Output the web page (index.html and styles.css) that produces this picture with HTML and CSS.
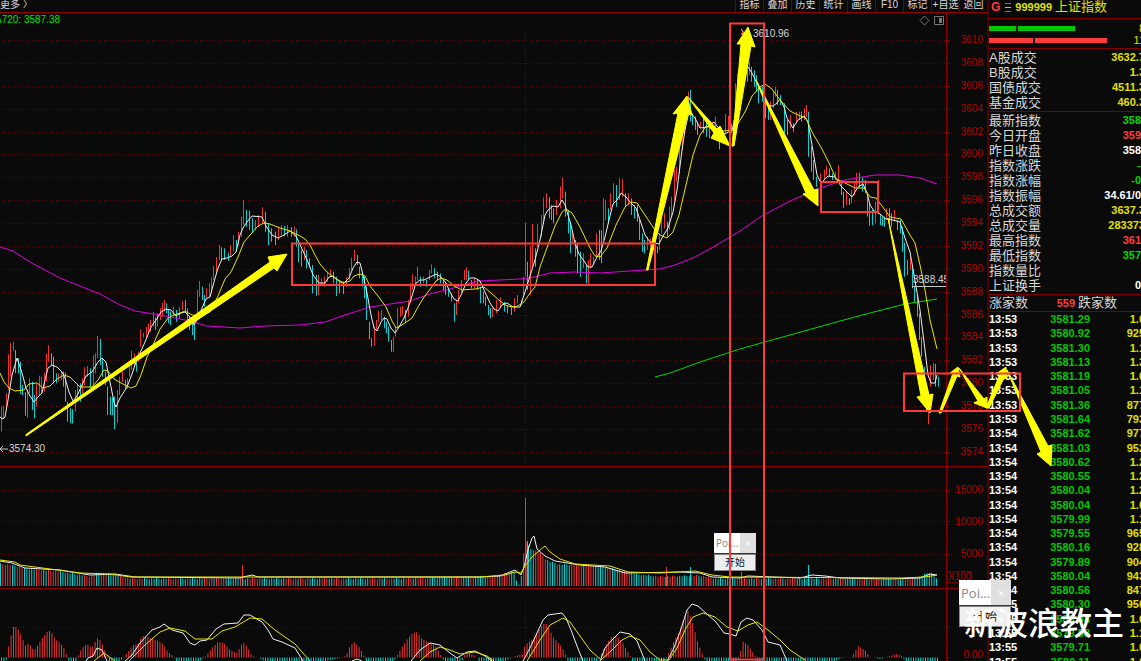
FILE: index.html
```html
<!DOCTYPE html>
<html lang="zh-CN">
<head>
<meta charset="utf-8">
<meta name="viewport" content="width=device-width, initial-scale=1">
<title>上证指数 999999</title>
<link rel="stylesheet" href="styles.css">
</head>
<body>
<div class="app">
  <main class="charts">
    <nav class="toolbar">
      <button class="more" type="button">更多 〉</button>
      <button type="button">指标</button><button type="button">叠加</button><button type="button">历史</button><button type="button">统计</button><button type="button">画线</button><button type="button">F10</button><button type="button">标记</button><button type="button">+自选</button><button type="button">返回</button>
    </nav>
    <section class="panel price">
      <svg id="price" viewBox="0 13 987 454" preserveAspectRatio="none">
        <g id="price-grid"></g>
        <path class="frame" d="M0 466.5H987M946.5 13V467"/>
        <path class="grid" d="M525.5 30V466"/>
        <g id="candles"></g>
        <polyline class="magenta" points="0,247 13,251 30,262 60,278 100,294 120,305 135,311 160,315 190,321 207,326 240,328 265,326 300,325 325,322 345,315 370,307 390,304 410,301 430,294 450,289 470,283 480,281 520,279 535,277 550,273 575,272 600,273 630,271 660,269 675,265 695,257 715,246 740,231 760,217 790,201 820,188 845,180 875,175 900,175 920,178 937,184"/>
        <polyline class="green" points="655,377 670,373 700,362 740,349 790,335 840,321 870,313 905,304 937,299"/>
        <polyline class="white" points="0,417 3,419 5,417 8,400 12,375 17,358 22,373 26,388 30,396 34,402 38,397 42,393 45,380 48,368 52,365 57,367 62,372 65,378 69,392 73,401 77,396 82,385 86,376 92,372 98,362 102,358 106,362 110,382 114,402 116,407 120,398 127,387 132,374 136,362 140,353 145,342 151,327 156,320 161,312 166,309 171,310 176,316 181,313 185,312 190,317 194,325 198,318 202,308 206,299 210,297 214,282 218,268 222,259 227,258 232,256 236,252 240,235 243,228 247,222 252,216 262,217 266,226 272,235 278,238 284,235 290,231 296,236 303,251 308,262 313,275 319,283 325,283 329,277 333,276 338,280 344,283 349,278 353,268 357,262 360,263 363,275 367,293 371,315 374,328 377,331 381,322 384,318 387,319 391,328 395,333 399,327 404,318 408,308 412,296 416,283 420,280 424,280 430,277 436,274 441,277 446,283 450,292 454,299 458,301 462,293 466,283 470,278 475,278 480,281 485,292 490,303 494,309 498,311 502,305 507,303 513,307 520,307 525,292 530,276 535,260 540,240 545,215 548,210 553,206 558,207 562,200 565,205 568,215 571,225 575,243 579,254 584,261 588,267 592,267 597,257 601,251 605,237 609,220 613,204 617,200 621,193 626,197 630,202 636,208 640,220 645,235 650,242 655,243 659,244 663,236 668,228 673,212 677,190 682,150 685,130 688,116 691,113 695,118 700,128 708,127 714,122 720,130 725,134 732,130 737,112 742,80 745,70 748,67 752,73 757,83 762,95 768,106 773,106 777,103 780,99 784,107 787,118 793,128 798,120 804,116 808,122 812,145 817,175 821,183 828,176 835,177 841,186 848,193 852,197 858,187 863,184 867,193 870,205 874,211 880,214 886,219 893,220 900,222 905,238 910,252 914,275 920,310 925,350 928,375 931,383 935,383 937,375"/>
        <polyline class="yellow" points="0,373 4,382 9,388 15,391 24,390 29,384 37,383 43,388 50,386 57,379 64,375 70,377 80,387 92,387 98,380 104,370 108,371 114,379 121,383 131,388 136,386 141,375 147,357 153,345 160,329 168,318 174,315 180,313 185,311 192,315 200,316 210,312 218,296 225,279 231,272 238,257 244,242 251,234 258,226 264,223 270,224 280,228 290,231 300,236 305,239 310,245 315,255 320,264 326,271 333,277 342,283 350,281 354,276 360,274 365,276 370,286 378,296 386,307 392,321 396,328 402,325 412,318 418,307 424,297 431,288 436,281 441,278 447,280 454,286 462,290 475,289 484,287 491,293 500,301 507,306 516,307 524,302 530,293 535,287 540,267 548,245 555,226 562,212 566,209 572,213 580,227 590,248 595,256 600,257 607,248 616,225 625,207 631,202 637,203 645,215 655,230 660,235 667,238 673,232 679,215 686,185 693,155 700,135 706,126 715,129 724,131 734,130 745,112 752,96 760,87 765,84 772,89 780,100 790,111 798,115 806,118 812,132 822,149 830,165 836,179 845,183 855,188 864,188 870,197 876,198 882,206 890,217 901,219 910,235 915,243 920,265 925,290 930,320 937,349"/>
        <path class="mark" d="M912 286.5H946M1 449H8M3 446L0 449L3 452M741 29L745 34M741 34h4"/>
        <path class="icon" d="M924.500 16L929 20.500L924.500 25L920 20.500ZM934.500 16.500h9v8h-9z"/>
        <path class="icon-fill" d="M939 18h3v5h-3z"/>
      </svg>
      <ol class="axis axis-price">
        <li>3610</li><li>3608</li><li>3606</li><li>3604</li><li>3602</li><li>3600</li><li>3598</li><li>3596</li><li>3594</li><li>3592</li><li>3590</li><li>3588</li><li>3586</li><li>3584</li><li>3582</li><li>3580</li><li>3578</li><li>3576</li><li>3574</li>
      </ol>
      <span class="tag ma">A720: 3587.38</span>
      <span class="tag high">3610.96</span>
      <span class="tag low">3574.30</span>
      <span class="tag level">3588.45</span>
    </section>
    <section class="panel volume">
      <svg viewBox="0 467 987 122" preserveAspectRatio="none">
        <path class="grid" d="M2 490.500H946M2 521.500H946M2 554.500H946M525.500 482V586"/>
        <path class="frame" d="M0 588.500H987M946.500 467V589M946 490.500h4M946 521.500h4M946 554.500h4M946 506.500h2M946 538.500h2"/>
        <g id="volume"></g>
        <polyline class="white" points="0,561 12,563 25,568 60,570 90,575 115,574 135,577 240,578 243,577 252,575 258,577 350,577 480,577 500,576 515,570 521,575 524,567 528,550 532,538 534,536 537,549 545,556 555,561 580,565 605,567 625,573 680,572 700,573 712,577 740,578 748,576 800,578 812,575 825,576 840,578 890,579 920,578 930,574 937,575"/>
        <polyline class="yellow" points="0,560 15,562 20,565 50,569 80,573 110,574 130,577 480,577 505,575 515,572 521,573 525,566 532,557 540,550 545,546 550,552 560,559 575,564 610,566 628,572 660,573 695,571 712,575 730,577 900,578 925,577 937,575"/>
      </svg>
      <ol class="axis axis-volume"><li>15000</li><li>10000</li><li>5000</li><li class="unit">X100</li></ol>
    </section>
    <section class="panel macd">
      <svg viewBox="0 589 987 72" preserveAspectRatio="none">
        <path class="grid" d="M2 627.500H946M525.500 604V661"/>
        <path class="frame" d="M946.500 589V661M946 627.500h4M946 657.500h4M946 642.500h2"/>
        <g id="macd"></g>
        <path class="white" d="M86 661L88 658L93 656L97 648L102 650L107 661M125 661L132 655L140 643L152 630L160 627L164 624L172 630L183 633L190 643L195 645L200 641L207 640L216 629L224 624L238 623L244 615L250 615L262 622L268 630L273 639L282 642L295 648L303 661M352 661L357 659L362 661M411 661L420 650L430 643L440 645L450 653L457 658L467 652L475 651L485 656L492 661M523 661L530 648L537 633L543 620L548 615L562 613L566 618L571 630L577 646L583 661M600 661L605 648L612 640L620 632L630 634L637 641L645 661M667 661L673 650L680 632L687 610L692 604L698 606L708 615L716 622L724 633L730 634L736 636L741 622L747 618L753 620L762 630L768 642L780 645L787 661"/>
        <path class="yellow" d="M94 661L104 653L115 661M129 661L145 645L160 632L170 628L185 631L195 639L212 639L222 631L235 627L250 618L262 619L275 630L295 644L310 661M420 661L430 652L440 647L450 650L460 654L475 652L487 656L494 661M527 661L540 640L550 625L563 618L570 622L580 636L590 650L601 660L612 650L622 640L630 636L640 640L650 652L660 660L669 660L677 648L686 628L693 617L703 613L715 617L727 627L738 631L748 625L757 622L768 630L780 640L790 650L805 660"/>
      </svg>
      <ol class="axis axis-macd"><li>5.00</li><li>0.00</li></ol>
    </section>
  </main>

  <aside class="quote">
    <header class="name">
      <b class="up">G</b>
      <svg class="menu" viewBox="0 0 6 9"><path stroke="#ff3c3c" d="M0 .500h6"/><path stroke="#bbb" d="M0 4.500h6"/><path stroke="#00d000" d="M0 8.500h6"/></svg>
      <b>999999</b><span class="cn">上证指数</span>
    </header>
    <div class="meters">
      <div class="meter green-bars"><i></i><i></i><span>8</span></div>
      <div class="meter red-bars"><i></i><i></i><span>11</span></div>
    </div>
    <table class="stats">
      <tbody>
        <tr><th>A股成交</th><td>3632.7</td></tr>
        <tr><th>B股成交</th><td>1.3</td></tr>
        <tr><th>国债成交</th><td>4511.3</td></tr>
        <tr><th>基金成交</th><td>460.3</td></tr>
      </tbody>
    </table>
    <table class="stats">
      <tbody>
        <tr><th>最新指数</th><td class="down whole">358</td></tr>
        <tr><th>今日开盘</th><td class="up whole">359</td></tr>
        <tr><th>昨日收盘</th><td class="flat whole">358</td></tr>
        <tr><th>指数涨跌</th><td class="down whole">-</td></tr>
        <tr><th>指数涨幅</th><td class="down whole">-0</td></tr>
        <tr><th>指数振幅</th><td class="flat whole">34.61/0</td></tr>
        <tr><th>总成交额</th><td>3637.3</td></tr>
        <tr><th>总成交量</th><td>283373</td></tr>
        <tr><th>最高指数</th><td class="up whole">361</td></tr>
        <tr><th>最低指数</th><td class="down whole">357</td></tr>
        <tr><th>指数量比</th><td></td></tr>
        <tr><th>上证换手</th><td class="flat whole">0</td></tr>
      </tbody>
    </table>
    <div class="breadth"><span>涨家数</span><b class="up">559</b><span>跌家数</span></div>
    <table class="ticks"><tbody>
      <tr><td>13:53</td><td>3581.29</td><td>1.0</td></tr>
      <tr><td>13:53</td><td>3580.92</td><td>925</td></tr>
      <tr><td>13:53</td><td>3581.30</td><td>1.1</td></tr>
      <tr><td>13:53</td><td>3581.13</td><td>1.3</td></tr>
      <tr><td>13:53</td><td>3581.19</td><td>1.0</td></tr>
      <tr><td>13:53</td><td>3581.05</td><td>1.1</td></tr>
      <tr><td>13:53</td><td>3581.36</td><td>877</td></tr>
      <tr><td>13:53</td><td>3581.64</td><td>793</td></tr>
      <tr><td>13:54</td><td>3581.62</td><td>977</td></tr>
      <tr><td>13:54</td><td>3581.03</td><td>952</td></tr>
      <tr><td>13:54</td><td>3580.62</td><td>1.2</td></tr>
      <tr><td>13:54</td><td>3580.55</td><td>1.2</td></tr>
      <tr><td>13:54</td><td>3580.04</td><td>1.2</td></tr>
      <tr><td>13:54</td><td>3580.04</td><td>1.0</td></tr>
      <tr><td>13:54</td><td>3579.99</td><td>1.1</td></tr>
      <tr><td>13:54</td><td>3579.55</td><td>965</td></tr>
      <tr><td>13:54</td><td>3580.16</td><td>928</td></tr>
      <tr><td>13:54</td><td>3579.89</td><td>904</td></tr>
      <tr><td>13:54</td><td>3580.04</td><td>943</td></tr>
      <tr><td>13:54</td><td>3580.56</td><td>847</td></tr>
      <tr><td>13:55</td><td>3580.30</td><td>950</td></tr>
      <tr><td>13:55</td><td>3580.08</td><td>1.0</td></tr>
      <tr><td>13:55</td><td>3579.58</td><td>1.1</td></tr>
      <tr><td>13:55</td><td>3579.71</td><td>1.0</td></tr>
      <tr><td>13:55</td><td>3580.11</td><td>1.0</td></tr>
    </tbody></table>
  </aside>

  <div class="popup popup-small">
    <div class="popup-bar"><span>Poi...</span><button type="button" aria-label="关闭">×</button></div>
    <button class="start" type="button">开始</button>
  </div>
  <div class="popup popup-large">
    <div class="popup-bar"><span>Poi...</span><button type="button" aria-label="关闭">×</button></div>
    <button class="start" type="button">开始</button>
  </div>

  <svg class="drawings" viewBox="0 0 1141 661" preserveAspectRatio="none">
    <g class="arrows">
      <path d="M26 434.500L270 262L268 257L287 254L277 271L274 268L26 436Z"/>
      <path d="M646.500 270L678 113L673 114L687 96L692 115L688 114L648 270Z"/>
      <path d="M688 97L717 129L720 126L730 146L711 138L714 133Z"/>
      <path d="M732 146L741 44L737 44L748 27L755 47L751 46L734 146Z"/>
      <path d="M756 80L814 190L818 189L818 206L803 194L806 193Z"/>
      <path d="M888 218L929 395L933 394L930 413L917 397L921 396Z"/>
      <path d="M939 413L953 373L950 373L958 367L960 377L957 376L941 413Z"/>
      <path d="M959 368L984 399L987 397L987 408L974 403L978 401Z"/>
      <path d="M986 408L1000 374L996 374L1006 367L1007 379L1004 378L989 408Z"/>
      <path d="M1007 370L1048 446L1052 445L1051 466L1037 454L1041 452Z"/>
    </g>
    <g class="boxes">
      <rect x="292" y="243.500" width="363" height="41.500"/>
      <rect x="730" y="23.500" width="34" height="636"/>
      <rect x="821" y="182" width="57" height="30"/>
      <rect x="904" y="373.500" width="116" height="37.500"/>
    </g>
  </svg>
  <p class="watermark">新波浪教主</p>
</div>
<script src="chart.js"></script>
</body>
</html>
```

FILE: styles.css
```css
* { box-sizing: border-box; }

body {
  margin: 0;
  background: #0a0a0a;
  color: #d8d8d8;
  font-family: "Liberation Sans", "Noto Sans CJK SC", sans-serif;
  overflow: hidden;
}

button {
  margin: 0;
  padding: 0;
  border: 0;
  background: none;
  color: inherit;
  font: inherit;
}

.app {
  position: relative;
  display: grid;
  grid-template-columns: minmax(0, 1fr) 154px;
  height: 100vh;
  overflow: hidden;
}

/* chart column */
.charts {
  display: grid;
  grid-template-rows: 13px 454fr 122fr 72fr;
  min-height: 0;
}

.toolbar {
  display: flex;
  border-bottom: 1px solid #900000;
  overflow: hidden;
  font-size: 10px;
  line-height: 10px;
}

.toolbar button {
  width: 28px;
  height: 12px;
  padding-bottom: 2px;
  border-left: 1px solid #700000;
  white-space: nowrap;
}

.toolbar .more {
  width: auto;
  margin-right: auto;
  border: 0;
}

.panel {
  position: relative;
  display: grid;
  min-height: 0;
}

.panel > svg {
  grid-area: 1 / 1;
  width: 100%;
  height: 100%;
  min-height: 0;
  overflow: hidden;
}

.panel path,
.panel polyline { fill: none; stroke-width: 1; }

.grid { stroke: #6a0000; stroke-dasharray: 1 2; }
.frame { stroke: #8a0000; }
.panel .white { stroke: #f0f0f0; }
.panel .yellow { stroke: #e6e600; }
.panel .magenta { stroke: #e000e0; }
.panel .green { stroke: #00d800; }
.mark { stroke: #c8c8c8; }
.icon { stroke: #777777; }
.panel .icon-fill { fill: #777777; }
.rise { stroke: #f03434; }
.fall { stroke: #00d4d4; }

.axis {
  grid-area: 1 / 1;
  justify-self: end;
  width: 41px;
  margin: 0;
  padding: 0 4px 0 1px;
  display: flex;
  flex-direction: column;
  list-style: none;
  color: #b40000;
  font-size: 10px;
  line-height: 12px;
  text-align: right;
}

.axis-price {
  justify-content: space-between;
  padding-top: 21px;
  padding-bottom: 9px;
}

.axis-volume { padding-top: 17px; gap: 20px; }

.unit {
  align-self: flex-start;
  margin-top: -9px;
  border: 1px solid #700000;
  line-height: 10px;
}

.axis-macd {
  justify-content: space-between;
  padding-top: 32px;
}

.tag {
  position: absolute;
  font-size: 10px;
  line-height: 12px;
  white-space: nowrap;
}

.ma { left: -5px; top: 1px; color: #00e000; }
.high { left: 753px; top: 15px; }
.low { left: 9px; top: 430px; }
.level { left: 913px; top: 261px; width: 33px; overflow: hidden; }

/* quote column */
.quote {
  display: flex;
  flex-direction: column;
  border-left: 2px solid #500000;
  overflow: hidden;
  color: #e0e000;
  font-size: 11px;
}

.quote > * { flex: none; }

.up { color: #ff3c3c; }
.stats .down { color: #00d800; }
.stats .flat { color: #ffffff; }

.name {
  display: flex;
  align-items: center;
  height: 19px;
  padding: 0 0 4px 2px;
  border-bottom: 1px solid #800000;
  white-space: nowrap;
}

.name .up { font-size: 12px; }
.menu { width: 6px; height: 9px; margin: 0 4px 0 5px; }
.name .cn { margin-left: 3px; font-size: 13px; line-height: 14px; }

.meters {
  display: flex;
  flex-direction: column;
  height: 30px;
  border-bottom: 1px solid #800000;
  padding-top: 3px;
}

.meter {
  display: flex;
  align-items: center;
  gap: 2px;
  height: 12px;
}

.meter i { height: 5px; }
.meter span { margin-left: auto; margin-right: -4px; }
.green-bars i { width: 27px; background: #00c800; }
.green-bars i + i { width: 57px; }
.red-bars i { width: 44px; background: #ff3c3c; }
.red-bars i + i { width: 72px; }

.stats {
  width: calc(100% + 4px);
  padding: 1px 0;
  border-collapse: separate;
  border-spacing: 0;
  border-bottom: 1px solid #800000;
}

.stats th,
.stats td { height: 15px; padding: 0; line-height: 15px; }

.stats th {
  color: #d8d8d8;
  font-size: 13px;
  font-weight: 400;
  text-align: left;
  white-space: nowrap;
}

.stats td { font-weight: bold; text-align: right; }
.stats .whole { padding-right: 4px; }

.breadth {
  display: flex;
  align-items: center;
  height: 17px;
  border-bottom: 1px solid #800000;
  color: #d8d8d8;
  font-size: 13px;
  line-height: 16px;
  white-space: nowrap;
}

.breadth b { width: 50px; padding-right: 3px; font-size: 11px; text-align: right; }

.ticks {
  width: calc(100% + 4px);
  height: calc(100vh - 304px);
  border-collapse: collapse;
  font-weight: bold;
  line-height: 12px;
}

.ticks td { padding: 0; text-align: right; }
.ticks td:first-child { width: 29px; color: #ffffff; text-align: left; }
.ticks td:nth-child(2) { width: 72px; color: #00c800; }

/* floating windows */
.popup {
  position: absolute;
  display: flex;
  flex-direction: column;
  background: #ffffff;
  color: #888888;
}

.popup-small { left: 714px; top: 533px; width: 42px; height: 38px; font-size: 10px; }
.popup-large { left: 959px; top: 580px; width: 52px; height: 47px; font-size: 13px; }

.popup-bar {
  flex: 1;
  display: flex;
  justify-content: space-between;
  align-items: stretch;
  font-family: "Open Sans", sans-serif;
  border-bottom: 1px solid #333333;
}

.popup-bar span { padding-left: 2px; align-self: center; line-height: 14px; }
.popup-bar button { width: 38%; background: #e0e0e0; color: #ffffff; }

.start {
  height: 17px;
  border: 1px solid #888888;
  background: #eeeeee;
  color: #111111;
  font-size: 10px;
  line-height: 12px;
}

.popup-large .start { height: 21px; font-size: 12px; }

/* hand-drawn layer */
.drawings {
  position: absolute;
  inset: 0;
  width: 100%;
  height: 100%;
  pointer-events: none;
}

.arrows { fill: #ffff00; stroke: #ffff00; stroke-width: 1; }
.boxes { fill: none; stroke: #ff3838; stroke-width: 2; }

.watermark {
  position: absolute;
  right: 17px;
  bottom: 14px;
  margin: 0;
  color: #ffffff;
  font-size: 32px;
  font-weight: 500;
  line-height: 46px;
  white-space: nowrap;
}
```

FILE: chart.js
```js
const NS = 'http://www.w3.org/2000/svg';
const STEP = 2.4;

function addPath(id, cls, d) {
  const p = document.createElementNS(NS, 'path');
  p.setAttribute('class', cls);
  p.setAttribute('d', d);
  document.getElementById(id).appendChild(p);
}

function interpolate(points, x) {
  let i = 1;
  while (i < points.length - 1 && points[i][0] < x) i++;
  const a = points[i - 1], b = points[i];
  const t = Math.min(1, Math.max(0, (x - a[0]) / (b[0] - a[0])));
  return a.slice(1).map((v, k) => v + (b[k + 1] - v) * t);
}

const parse = (s) => s.trim().split(/\s+/).map((p) => p.split(',').map(Number));

/* Price rows and axis ticks: 19 levels from 3610 to 3574. */
let rows = '', ticks = '';
for (let i = 0; i < 19; i++) {
  const y = Math.round(40 + i * 412 / 18) + 0.5;
  rows += `M2 ${y}H946`;
  ticks += `M946 ${y}h4M946 ${y + 11}h2`;
}
addPath('price-grid', 'grid', rows);
addPath('price-grid', 'frame', ticks);

/* Bars as x,high,low; high and low are thirds of a unit below each block's base. */
const blocks = [
  [230, '1,530,605 3,527,567 6,490,530 8,373,480 10,338,440 13,335,362 15,360,430 18,385,430 20,395,492 22,465,495 25,487,557 27,478,563 29,445,490 32,455,540 34,495,565 36,463,530 39,437,495 41,440,490 44,428,485 46,372,455 48,346,395 51,370,405 53,380,460 56,430,460 58,430,455 61,425,450 63,425,470 65,428,515 67,515,575 70,535,580 72,538,580 75,480,545 77,465,510 80,460,515 82,445,500 84,412,465 87,408,440 90,415,475 93,375,470 95,370,430 97,318,385 100,327,405 102,383,440 105,425,465 107,470,555 110,500,555 112,503,555 114,500,598 117,480,578 119,440,495 122,425,455 125,450,480 127,445,475 129,400,440 131,362,420 134,370,410 136,380,425 138,365,395 140,298,350 143,308,322 146,290,325 148,280,310 150,270,305 153,245,290 155,262,300 157,250,290 160,235,270 162,218,260 164,210,245 166,220,250 168,238,280 170,245,285 173,230,260 176,240,275 179,230,265 182,212,240 185,210,245 187,235,270 189,260,300 192,270,315 194,260,330 197,180,260 199,153,200 202,170,210 204,195,230 206,175,205 209,160,200 211,142,190 213,108,150 216,82,125 219,45,90 221,52,90 224,55,90 228,68,92 230,45,80 233,15,65 236,30,65 238,5,45 241,-40,20 243,-90,-15 246,-60,-10 249,-58,0 252,-35,10 255,-30,0 258,-45,-10 262,-68,-20 265,-55,5 268,-20,45 271,-5,35 275,5,45 278,-10,30 281,-15,15 284,-12,18 287,-15,20'],
  [180, '291,142,170 294,140,170 296,148,200 298,190,247 301,210,260 304,200,240 306,210,265 309,235,262 312,255,340 316,285,347 318,285,345 321,295,318 324,290,320 327,275,305 330,268,290 333,275,310 336,290,348 339,305,340 343,305,342 346,290,320 349,265,300 351,233,270 354,210,242 357,225,255 359,260,295 362,275,320 364,290,355 366,320,420 369,425,477 371,475,500 374,440,497 376,420,450 378,393,425 381,390,420 384,410,445 386,425,460 388,440,485 391,480,515 393,470,515 395,440,470 397,385,440 400,380,410 402,378,405 405,390,430 408,360,410 410,310,370 412,283,330 415,290,310 417,260,300 420,290,320 423,290,310 426,300,320 429,270,300 431,253,280 434,265,295 437,275,300 440,280,310 443,300,330 445,310,345 448,325,350 451,340,365 454,370,425 456,360,405 458,330,370 461,300,340 464,270,300 466,262,300 468,272,300 471,300,325 474,295,325 477,300,330 480,320,370 483,335,370 485,350,378 488,375,405 490,385,415 492,385,412 496,360,400 500,352,385 504,365,395 507,375,400 511,380,405 514,355,395 517,345,370 521,360,375 523,290,350'],
  [90, '525,397,560 527,515,600 530,467,615 532,402,530 535,475,530 537,402,470 541,375,440 543,323,400 546,310,355 549,322,385 551,345,390 553,355,400 556,330,375 560,290,355 562,263,325 565,305,380 568,360,430 570,395,490 572,420,460 575,450,500 577,460,550 580,485,560 583,490,535 586,525,580 588,510,583 590,490,535 593,500,525 596,430,500 599,420,510 601,420,520 603,325,450 605,330,390 608,355,400 610,310,360 613,280,345 616,285,350 619,265,330 622,267,320 625,310,350 628,310,345 631,325,375 634,345,385 637,345,395 639,390,450 642,430,485 644,450,490 647,440,480 650,445,470 655,455,470 657,470,490 659,430,480 661,380,430 664,370,415 667,395,440 669,350,420 671,320,380 674,240,335 676,230,275 679,130,250 682,90,180 684,50,130 688,5,60 690,0,95 692,70,105 695,80,120 697,95,135 700,95,115 703,80,130 706,95,140 709,110,145 712,95,115 715,80,110 719,140,178 722,120,140 725,72,130 728,78,120 731,100,130 733,90,130'],
  [20, '735,190,330 737,160,280 740,120,165 742,30,100 747,150,185 749,127,165 751,140,185 754,150,200 756,165,215 758,190,250 762,200,245 765,230,295 768,260,300 770,245,300 773,215,265 775,200,230 777,210,255 780,225,255 784,250,340 787,300,345 790,285,325 793,310,335 796,275,310 799,275,300 801,275,305 804,265,300 806,255,290 808,275,410 811,380,455 813,420,480 816,470,500 820,460,495 824,450,480 826,437,465 829,445,470 832,460,480 835,455,480 838,435,485 841,480,525 843,515,563 846,515,555 849,535,555 851,510,550 854,485,525 856,458,500 859,458,500 862,470,515 865,480,520 867,530,590 869,550,617 872,570,615 875,545,610 878,480,580 880,585,615 882,590,618 884,590,620 886,565,600 889,565,610 891,580,620 894,570,605 897,600,630 900,600,640'],
  [200, '902,80,155 904,128,230 907,180,225 910,170,210 912,205,265 914,260,305 917,290,350 919,340,420 921,410,470 924,500,580 926,580,635 928,580,673 930,495,560 933,490,540 935,492,560 938,530,560']
];
let rise = '', fall = '', last = 999;
for (const [base, text] of blocks) {
  for (const [x, high, low] of parse(text)) {
    const top = base + high / 3, bottom = base + low / 3;
    const seg = `M${x + 0.5} ${top.toFixed(1)}V${bottom.toFixed(1)}`;
    if (top + bottom < last || x === 928) rise += seg; else fall += seg;
    last = top + bottom;
  }
}
addPath('candles', 'rise', rise);
addPath('candles', 'fall', fall);

/* Volume: x,top with the foot at 586. */
const vol = parse('0,563 15,565 25,568 60,571 90,576 98,572 110,573 130,578 250,578 400,578 490,576 505,573 515,571 517,584 521,584 522,553 524,553 526,541 530,548 533,549 540,552 545,558 550,561 560,564 580,564 600,566 612,568 640,574 660,576 700,575 715,578 850,578 895,579 918,577 928,572 932,573 937,579');
rise = 'M242.5 586V565M525.5 586V498M666.5 586V567M741.5 586V572';
fall = 'M690.5 586V567M808.5 586V565M527.5 586V541';
for (let i = 0, x = 0.5; x < 938; i++, x += STEP) {
  const y = interpolate(vol, x)[0] + (i * 7 % 5) * 0.3;
  const seg = `M${x.toFixed(1)} 586V${y.toFixed(1)}`;
  if (Math.sin(i * 0.9) + Math.sin(i * 0.37) > 0.1) rise += seg; else fall += seg;
}
addPath('volume', 'rise', rise);
addPath('volume', 'fall', fall);

/* MACD histogram: positive humps above 657.5, everything else runs below. */
const hist = parse('0,661 6,661 7,656 9,645 13,627 17,627 22,637 25,646 29,643 34,651 38,645 43,637 48,631 51,631 55,639 60,643 64,648 67,656 69,661 76,661 78,656 82,648 87,644 92,648 97,638 100,640 103,646 107,656 109,661 120,661 124,657 128,652 133,645 138,644 142,636 146,636 150,638 158,641 163,644 168,652 173,656 176,661 200,661 206,656 212,648 218,642 224,643 230,650 237,653 243,642 248,648 252,656 260,658 264,661 325,661 340,658 346,656 350,646 354,642 360,648 364,656 366,661 394,661 397,656 402,647 408,638 413,633 417,632 422,639 428,642 435,645 440,654 444,661 462,661 464,655 468,653 476,656 479,661 505,661 515,656 523,654 525,645 533,639 538,631 543,624 547,624 553,637 562,647 566,656 568,661 598,661 600,656 606,645 611,637 616,636 622,641 630,656 632,661 665,661 668,655 673,643 680,630 685,615 688,611 692,620 697,640 703,656 706,661 738,661 740,656 742,641 748,645 755,656 757,661 835,661 842,658 852,657 858,646 865,650 870,657 880,659 890,656 896,654 902,656 905,661 938,661');
rise = fall = '';
for (let x = 1.5; x < 938; x += STEP) {
  const y = interpolate(hist, x)[0];
  const seg = `M${x.toFixed(1)} 657.5V${y.toFixed(1)}`;
  if (y < 657.5) rise += seg; else fall += seg;
}
addPath('macd', 'rise', rise);
addPath('macd', 'fall', fall);
```
